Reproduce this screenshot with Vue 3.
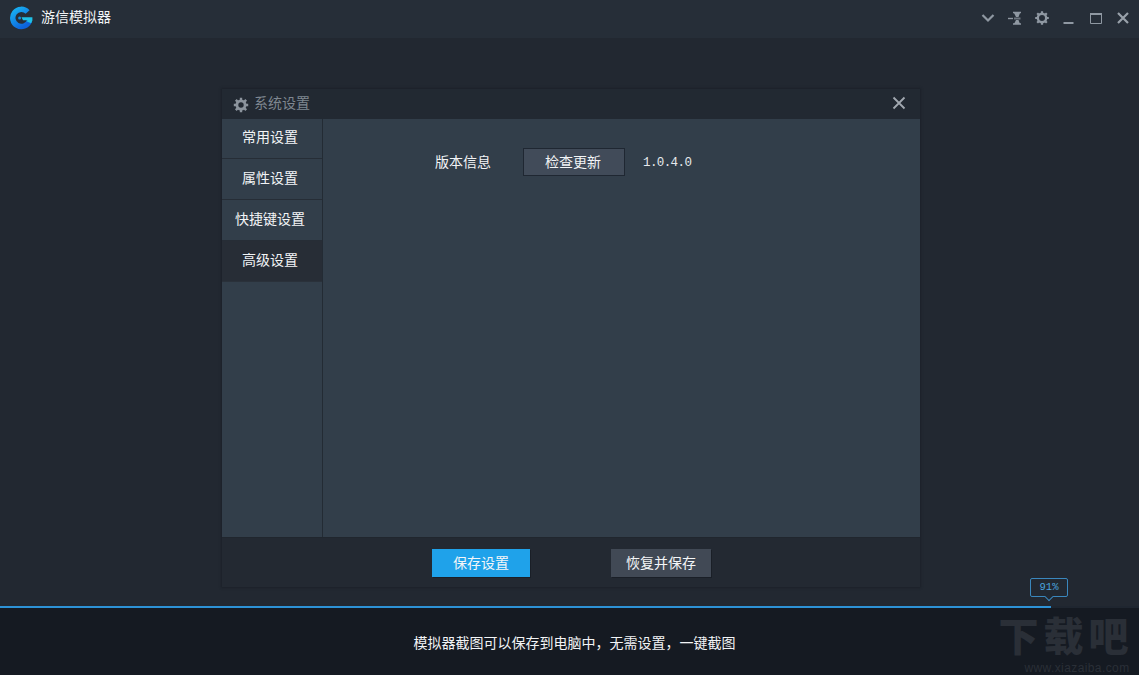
<script setup>
const menu = [
  { label: '常用设置' },
  { label: '属性设置' },
  { label: '快捷键设置' },
  { label: '高级设置', active: true },
]
</script>

<template>
  <div class="app">
    <header class="titlebar">
      <svg class="logo" width="24" height="24" viewBox="0 0 24 24">
        <defs>
          <linearGradient id="lg" x1="0" y1="0" x2="0.7" y2="1">
            <stop offset="0" stop-color="#18b2f2" />
            <stop offset="1" stop-color="#0d63dc" />
          </linearGradient>
        </defs>
        <path d="M18.6 6A8.6 8.6 0 1 0 20.4 15" fill="none" stroke="url(#lg)" stroke-width="5.4" />
        <path d="M12.5 11.2H23.4V14.6C23 15.6 22.6 16.4 22 17.2L18 15.4 18.4 14.2H14Z" fill="#1fc0e6" />
        <circle cx="10.6" cy="12" r="1.5" fill="#0e8fe0" />
      </svg>
      <span class="app-name">游信模拟器</span>
      <div class="win-tools">
        <svg width="16" height="16" viewBox="0 0 16 16"><path d="M2.5 5 8 10.5 13.5 5" fill="none" stroke="#8f98a2" stroke-width="2.2" /></svg>
        <svg width="16" height="16" viewBox="0 0 16 16"><path d="M1 8.5H6" stroke="#8f98a2" stroke-width="1.4" /><path d="M6 2.5H14M6 14H14" stroke="#8f98a2" stroke-width="1.6" /><path d="M7 3 9 7H11.5L13 3ZM7 14 9 10H11.5L13 14Z" fill="#8f98a2" /><path d="M7 7.5H13.5V9.5H7Z" fill="#6d757f" /></svg>
        <svg width="16" height="16" viewBox="0 0 16 16"><circle cx="8" cy="8" r="4.2" fill="none" stroke="#8f98a2" stroke-width="2.4" /><path d="M8 1.2V3.5M8 12.5V14.8M1.2 8H3.5M12.5 8H14.8M3.2 3.2 4.8 4.8M11.2 11.2 12.8 12.8M3.2 12.8 4.8 11.2M11.2 4.8 12.8 3.2" stroke="#8f98a2" stroke-width="2.2" /></svg>
        <svg width="16" height="16" viewBox="0 0 16 16"><path d="M2.5 13H12.5" stroke="#8f98a2" stroke-width="2" /></svg>
        <svg width="16" height="16" viewBox="0 0 16 16"><path d="M2.5 3.5H13.5V13.5H2.5Z" fill="none" stroke="#8f98a2" /><path d="M2 4H14" stroke="#8f98a2" stroke-width="2" /></svg>
        <svg width="16" height="16" viewBox="0 0 16 16"><path d="M3 3 13 13M13 3 3 13" stroke="#99a1aa" stroke-width="2.2" /></svg>
      </div>
    </header>

    <main class="stage">
      <section class="dialog">
        <div class="dialog-head">
          <svg class="dialog-gear" width="16" height="16" viewBox="0 0 16 16">
            <circle cx="8" cy="8" r="4.1" fill="none" stroke="#8c949d" stroke-width="2.8" />
            <path d="M8 .8V3.5M8 12.5V15.2M.8 8H3.5M12.5 8H15.2M2.8 2.8 4.8 4.8M11.2 11.2 13.2 13.2M2.8 13.2 4.8 11.2M11.2 4.8 13.2 2.8" stroke="#8c949d" stroke-width="2.4" />
          </svg>
          <span class="dialog-title">系统设置</span>
          <svg class="dialog-close" width="14" height="14" viewBox="0 0 14 14"><path d="M1.5 1.5 12.5 12.5M12.5 1.5 1.5 12.5" stroke="#a2a8b0" stroke-width="1.8" /></svg>
        </div>
        <div class="dialog-body">
          <nav class="side">
            <div v-for="item in menu" :key="item.label" class="side-item" :class="{ active: item.active }">{{ item.label }}</div>
          </nav>
          <div class="content">
            <div class="row">
              <span class="row-label">版本信息</span>
              <button class="check">检查更新</button>
              <span class="version">1.0.4.0</span>
            </div>
          </div>
        </div>
        <footer class="dialog-foot">
          <button class="save">保存设置</button>
          <button class="reset">恢复并保存</button>
        </footer>
      </section>
    </main>

    <div class="progress">
      <div class="progress-fill"></div>
      <div class="badge">91%</div>
    </div>

    <footer class="tipbar">
      <span class="tip">模拟器截图可以保存到电脑中，无需设置，一键截图</span>
      <div class="mark">
        <span class="mark-big">下载吧</span>
        <span class="mark-url">www.xiazaiba.com</span>
      </div>
    </footer>
  </div>
</template>

<style>
html, body { margin: 0; background: #222831; }
</style>

<style scoped>
.app {
  width: 1139px;
  height: 675px;
  display: flex;
  flex-direction: column;
  overflow: hidden;
  background: #222831;
  font-family: "Noto Sans CJK SC", "Noto Sans", sans-serif;
  font-size: 14px;
  color: #f2f4f6;
}
.titlebar {
  height: 38px;
  flex: none;
  display: flex;
  align-items: center;
  padding: 0 8px 3px 9px;
  box-sizing: border-box;
  background: #262e38;
}
.logo { flex: none; }
.app-name { margin-left: 8px; font-size: 14px; line-height: 20px; margin-top: -4px; }
.win-tools { margin-left: auto; display: flex; gap: 11px; align-items: center; }
.stage {
  flex: 1;
  min-height: 0;
  padding: 51px 0 0 222px;
  box-sizing: border-box;
}
.dialog {
  width: 698px;
  height: 498px;
  display: flex;
  flex-direction: column;
  background: #232932;
  box-shadow: 0 0 2px 1px #1c2129;
}
.dialog-head {
  height: 30px;
  flex: none;
  display: flex;
  align-items: center;
  padding: 0 14px 0 11px;
  background: #222932;
  box-sizing: border-box;
}
.dialog-gear { margin-top: 1px; }
.dialog-title { margin-left: 5px; color: #7f8790; font-size: 14px; line-height: 20px; margin-top: -5px; }
.dialog-close { margin-left: auto; margin-top: -3px; }
.dialog-body { flex: 1; min-height: 0; display: flex; }
.side {
  width: 100px;
  flex: none;
  background: #323e4a;
  border-right: 1px solid #232b34;
}
.side-item {
  height: 40px;
  line-height: 37px;
  padding-right: 4px;
  text-align: center;
  border-bottom: 1px solid #262d36;
  font-size: 14px;
}
.side-item:first-child { height: 39px; line-height: 35px; }
.side-item.active { background: #272d36; border-bottom-color: #2a313a; }
.content { flex: 1; background: #323e4a; padding: 29px 0 0 112px; box-sizing: border-box; }
.row { display: flex; align-items: center; }
.row-label { width: 56px; line-height: 27px; font-size: 14px; margin-top: -1px; }
.check {
  margin-left: 32px;
  width: 102px;
  height: 28px;
  padding: 0 2px 3px 0;
  box-sizing: border-box;
  background: #414b59;
  border: 1px solid #1f2732;
  color: #f2f4f6;
  font: inherit;
}
.version {
  margin-left: 18px;
  margin-top: 1px;
  font-family: "Liberation Mono", monospace;
  font-size: 12.5px;
  letter-spacing: -0.6px;
  color: #e6e9ec;
}
.dialog-foot {
  height: 50px;
  flex: none;
  display: flex;
  align-items: flex-start;
  padding: 11px 0 0 210px;
  box-sizing: border-box;
  border-top: 1px solid #20262e;
  background: #232932;
}
.save, .reset {
  width: 98px;
  height: 28px;
  padding: 0 0 3px;
  border: 0;
  color: #f4f6f8;
  font: inherit;
}
.save { background: #1fa2ea; box-shadow: 1px 1px 0 #1a1f27; }
.reset { margin-left: 81px; width: 100px; background: #414955; box-shadow: 1px 1px 0 #1a1f27; }
.progress {
  height: 2px;
  flex: none;
  position: relative;
  background: #1f2630;
}
.progress-fill { width: 1051px; height: 2px; background: #2d92d6; }
.badge {
  position: absolute;
  left: 1030px;
  top: -28px;
  width: 38px;
  height: 19px;
  box-sizing: border-box;
  border: 1px solid #3a87bd;
  border-radius: 2px;
  color: #4aa4de;
  font-family: "Liberation Mono", monospace;
  font-size: 10.5px;
  line-height: 17px;
  text-align: center;
  background: #222831;
}
.badge::after {
  content: "";
  position: absolute;
  left: 15px;
  bottom: -4px;
  width: 6px;
  height: 6px;
  background: #222831;
  border-right: 1px solid #3a87bd;
  border-bottom: 1px solid #3a87bd;
  transform: rotate(45deg);
  box-sizing: border-box;
}
.tipbar {
  height: 67px;
  flex: none;
  position: relative;
  display: flex;
  justify-content: center;
  padding: 24px 0 0 10px;
  box-sizing: border-box;
  background: #151a22;
}
.tip { font-size: 14px; line-height: 20px; color: #f2f4f6; white-space: nowrap; }
.mark {
  position: absolute;
  left: 998px;
  top: 9px;
  width: 136px;
  display: flex;
  flex-direction: column;
  align-items: center;
  color: #2a2f37;
}
.mark-big {
  font-family: "Liberation Sans", "Noto Sans CJK SC", sans-serif;
  font-size: 40px;
  line-height: 40px;
  height: 40px;
  font-weight: 900;
  letter-spacing: 5px;
  white-space: nowrap;
}
.mark-url {
  margin-top: 4.5px;
  margin-left: 22px;
  font-family: "Liberation Sans", sans-serif;
  font-size: 12px;
  line-height: 12px;
  letter-spacing: 0.4px;
}
</style>
